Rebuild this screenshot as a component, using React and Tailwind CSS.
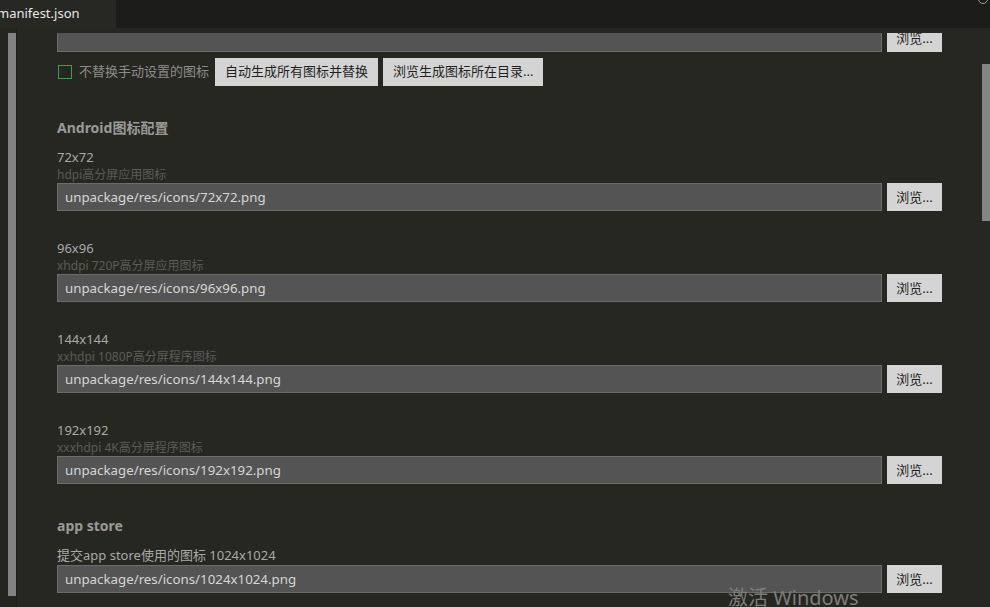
const font = { fontFamily: '"Noto Sans", "Noto Sans CJK SC", sans-serif' }

const icons = [
  { size: '72x72', desc: 'hdpi高分屏应用图标', path: 'unpackage/res/icons/72x72.png' },
  { size: '96x96', desc: 'xhdpi 720P高分屏应用图标', path: 'unpackage/res/icons/96x96.png' },
  { size: '144x144', desc: 'xxhdpi 1080P高分屏程序图标', path: 'unpackage/res/icons/144x144.png' },
  { size: '192x192', desc: 'xxxhdpi 4K高分屏程序图标', path: 'unpackage/res/icons/192x192.png' },
]

function PathInput({ value }) {
  return (
    <div className="flex h-[28px] gap-[5px]">
      <div className="flex flex-1 items-center border border-[#6c6c6c] bg-[#545454] pl-[7px] pt-[2px] text-[13.3px] text-[#d6d6d6]">
        {value}
      </div>
      <button className="flex w-[55px] items-center justify-center bg-[#d4d4d4] pt-[1px] text-[13px] text-[#1f1f1f]">
        浏览...
      </button>
    </div>
  )
}

function IconField({ size, desc, path, first }) {
  return (
    <div className={first ? 'mt-[11px]' : 'mt-[29px]'}>
      <p className="h-[17px] text-[13px] leading-[17px] text-[#a9a9a6]">{size}</p>
      <p className="h-[17px] text-[12px] leading-[17px] text-[#5b5b57]">{desc}</p>
      <PathInput value={path} />
    </div>
  )
}

export default function App() {
  return (
    <div className="relative flex h-[607px] w-[990px] flex-col overflow-hidden bg-[#272722]" style={font}>
      <div className="flex h-[28px] shrink-0 bg-[#1c1d1a]">
        <div className="flex w-[116px] items-center overflow-hidden bg-[#272723] text-[13px] text-[#e6e6e6]">
          <span className="-ml-[3px]">manifest.json</span>
        </div>
      </div>

      <div className="flex min-h-0 flex-1">
        <div className="w-[8px] bg-[#252520]" />
        <div className="w-[8px] bg-[#252520] pt-[5px]">
          <div className="h-[563px] bg-[#828282]" />
        </div>
        <div className="w-px bg-[#1e1e1b]" />

        <div className="mt-[5px] flex-1 overflow-hidden pl-[40px] pr-[40px]">
          <div className="-mt-[9px]">
            <PathInput value="" />
          </div>

          <div className="mt-[6px] flex h-[28px] items-center">
            <span className="ml-[1px] h-[14px] w-[14px] border border-[#3f9b50]" />
            <span className="ml-[7px] text-[13px] text-[#8c8c88]">不替换手动设置的图标</span>
            <button className="ml-[6px] h-[28px] bg-[#d4d4d4] px-[10px] text-[13px] text-[#1f1f1f]">
              自动生成所有图标并替换
            </button>
            <button className="ml-[5px] h-[28px] bg-[#d4d4d4] px-[10px] text-[13px] text-[#1f1f1f]">
              浏览生成图标所在目录...
            </button>
          </div>

          <h2 className="mt-[32px] h-[20px] text-[14px] font-bold leading-[20px] text-[#9a9a97]">
            Android图标配置
          </h2>
          {icons.map((icon, i) => (
            <IconField key={icon.size} {...icon} first={i === 0} />
          ))}

          <h2 className="mt-[32px] h-[20px] text-[14px] font-bold leading-[20px] text-[#9a9a97]">
            app store
          </h2>
          <p className="mt-[10px] h-[19px] text-[13px] leading-[19px] text-[#a9a9a6]">
            提交app store使用的图标 1024x1024
          </p>
          <PathInput value="unpackage/res/icons/1024x1024.png" />
        </div>

        <div className="w-[8px]">
          <div className="mt-[36px] h-[157px] bg-[#858585]" />
        </div>
      </div>

      <span className="absolute left-[978px] top-[-6px] h-[10px] w-[10px] rounded-full border border-[#9a9a9a]" />
      <span className="absolute left-[728px] top-[583px] text-[20px] text-[#7e7e7b]">激活 Windows</span>
    </div>
  )
}
